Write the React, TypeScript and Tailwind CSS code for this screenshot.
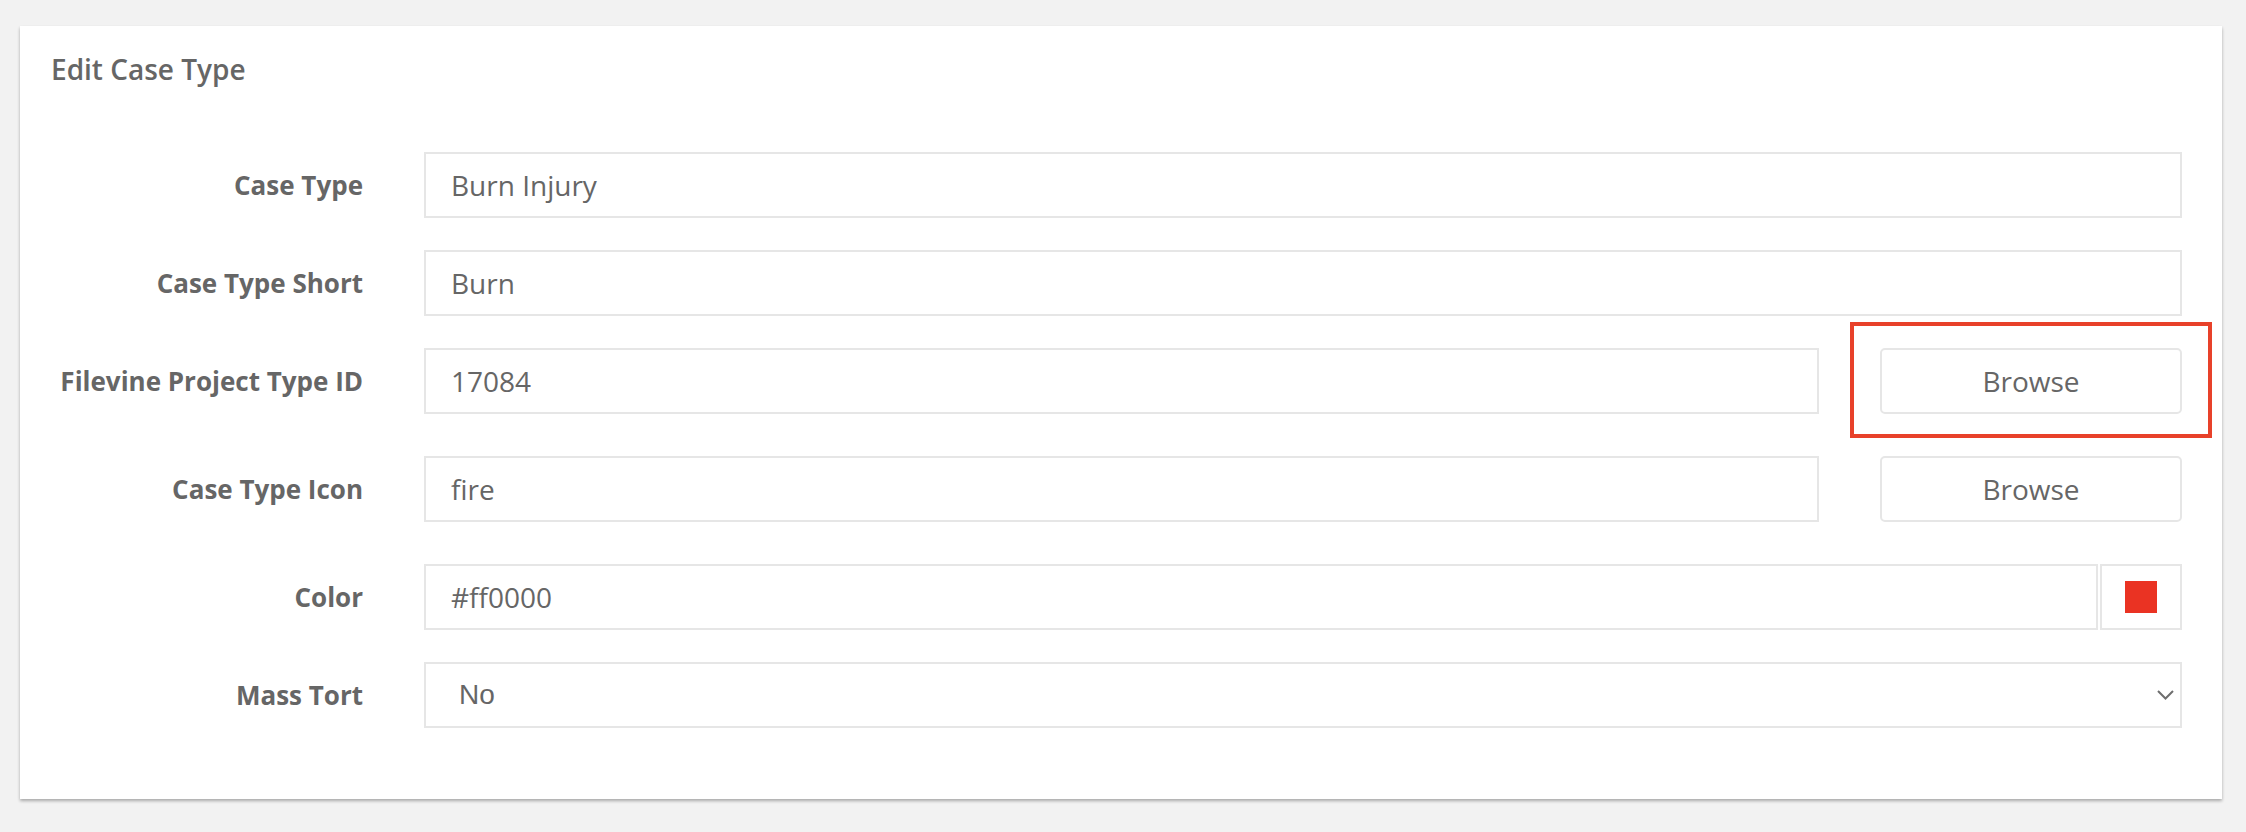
import React from 'react';

const font = { fontFamily: '"Open Sans", "Liberation Sans", sans-serif' };

const inputClass =
  'h-[66px] w-full border-2 border-[#e6e6e6] bg-white px-[25px] text-[28px] text-[#666666] outline-none';

const Label: React.FC<{ text: string }> = ({ text }) => (
  <label className="w-[312px] shrink-0 text-right text-[26px] font-bold text-[#666666]">{text}</label>
);

const BrowseButton: React.FC = () => (
  <button
    type="button"
    className="h-[66px] w-[302px] shrink-0 rounded-[5px] border-2 border-[#e6e6e6] bg-white text-[28px] text-[#666666]"
  >
    Browse
  </button>
);

export default function App() {
  return (
    <div className="min-h-[832px] bg-[#f2f2f2] pt-[26px] pl-[20px]" style={font}>
      <div className="w-[2202px] bg-white pt-[23px] pb-[71px] pl-[31px] pr-[40px] shadow-[0_2px_3px_rgba(0,0,0,0.3)]">
        <h2 className="h-[40px] text-[28px] leading-[40px] font-semibold text-[#666666]">Edit Case Type</h2>

        <form className="mt-[63px] flex flex-col">
          <div className="flex items-center gap-[61px]">
            <Label text="Case Type" />
            <input className={inputClass} defaultValue="Burn Injury" style={font} />
          </div>

          <div className="mt-[32px] flex items-center gap-[61px]">
            <Label text="Case Type Short" />
            <input className={inputClass} defaultValue="Burn" style={font} />
          </div>

          <div className="mt-[32px] flex items-center gap-[61px]">
            <Label text="Filevine Project Type ID" />
            <div className="flex flex-1 items-center gap-[61px]">
              <input className={inputClass} defaultValue="17084" style={font} />
              <div className="relative shrink-0">
                <BrowseButton />
                <div className="pointer-events-none absolute -top-[26px] -bottom-[24px] -left-[30px] -right-[30px] border-4 border-[#e8412a]" />
              </div>
            </div>
          </div>

          <div className="mt-[42px] flex items-center gap-[61px]">
            <Label text="Case Type Icon" />
            <div className="flex flex-1 items-center gap-[61px]">
              <input className={inputClass} defaultValue="fire" style={font} />
              <BrowseButton />
            </div>
          </div>

          <div className="mt-[42px] flex items-center gap-[61px]">
            <Label text="Color" />
            <div className="flex flex-1 items-center gap-[2px]">
              <input className={inputClass} defaultValue="#ff0000" style={font} />
              <div className="flex h-[66px] w-[82px] shrink-0 items-center justify-center border-2 border-[#e6e6e6] bg-white">
                <span className="h-[32px] w-[32px] bg-[#ea3323]" />
              </div>
            </div>
          </div>

          <div className="mt-[32px] flex items-center gap-[61px]">
            <Label text="Mass Tort" />
            <div className="relative flex-1">
              <select
                className="h-[66px] w-full appearance-none border-2 border-[#e6e6e6] bg-white pl-[33px] text-[28px] text-[#666666] outline-none"
                style={{ fontFamily: '"Liberation Sans", Arial, sans-serif' }}
                defaultValue="No"
              >
                <option value="No">No</option>
                <option value="Yes">Yes</option>
              </select>
              <svg
                className="pointer-events-none absolute right-[8px] top-[28px]"
                width="17"
                height="10"
                viewBox="0 0 17 10"
                fill="none"
              >
                <polyline points="1,1 8.5,8.5 16,1" stroke="#6e6e6e" strokeWidth="2" />
              </svg>
            </div>
          </div>
        </form>
      </div>
    </div>
  );
}
